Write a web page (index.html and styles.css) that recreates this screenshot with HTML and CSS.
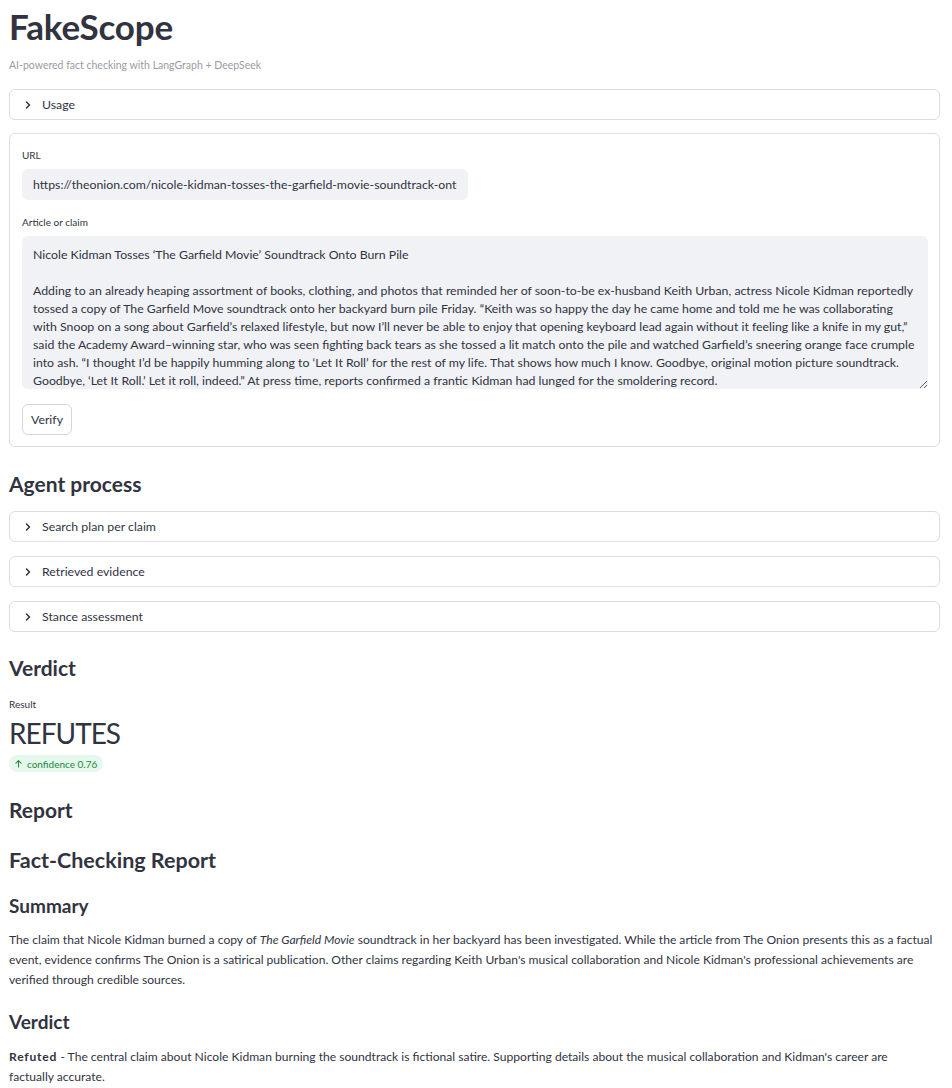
FILE: index.html
```html
<!DOCTYPE html>
<html lang="en">
<head>
<meta charset="utf-8">
<title>FakeScope</title>
<link rel="stylesheet" href="styles.css">
</head>
<body>
<main class="page">
  <h1 class="title">FakeScope</h1>
  <p class="caption">AI-powered fact checking with LangGraph + DeepSeek</p>

  <details class="expander usage">
    <summary><svg class="chev" viewBox="0 0 16 16" width="12" height="12"><path d="M6 4l4 4-4 4" fill="none" stroke="#31333f" stroke-width="2" stroke-linecap="round" stroke-linejoin="round"/></svg><span>Usage</span></summary>
  </details>

  <form class="form-box">
    <label class="field-label" for="url">URL</label>
    <input id="url" class="url-input" type="text" value="https://theonion.com/nicole-kidman-tosses-the-garfield-movie-soundtrack-onto-burn-pile">
    <label class="field-label" for="article">Article or claim</label>
    <textarea id="article" class="article">Nicole Kidman Tosses ‘The Garfield Movie’ Soundtrack Onto Burn Pile

Adding to an already heaping assortment of books, clothing, and photos that reminded her of soon-to-be ex-husband Keith Urban, actress Nicole Kidman reportedly tossed a copy of The Garfield Move soundtrack onto her backyard burn pile Friday. “Keith was so happy the day he came home and told me he was collaborating with Snoop on a song about Garfield’s relaxed lifestyle, but now I’ll never be able to enjoy that opening keyboard lead again without it feeling like a knife in my gut,” said the Academy Award–winning star, who was seen fighting back tears as she tossed a lit match onto the pile and watched Garfield’s sneering orange face crumple into ash. “I thought I’d be happily humming along to ‘Let It Roll’ for the rest of my life. That shows how much I know. Goodbye, original motion picture soundtrack. Goodbye, ‘Let It Roll.’ Let it roll, indeed.” At press time, reports confirmed a frantic Kidman had lunged for the smoldering record.</textarea>
    <div class="btn-row"><button type="button" class="btn">Verify</button></div>
  </form>

  <h2 class="h2 agent-h">Agent process</h2>
  <div class="exp-list">
    <details class="expander">
      <summary><svg class="chev" viewBox="0 0 16 16" width="12" height="12"><path d="M6 4l4 4-4 4" fill="none" stroke="#31333f" stroke-width="2" stroke-linecap="round" stroke-linejoin="round"/></svg><span>Search plan per claim</span></summary>
    </details>
    <details class="expander">
      <summary><svg class="chev" viewBox="0 0 16 16" width="12" height="12"><path d="M6 4l4 4-4 4" fill="none" stroke="#31333f" stroke-width="2" stroke-linecap="round" stroke-linejoin="round"/></svg><span>Retrieved evidence</span></summary>
    </details>
    <details class="expander">
      <summary><svg class="chev" viewBox="0 0 16 16" width="12" height="12"><path d="M6 4l4 4-4 4" fill="none" stroke="#31333f" stroke-width="2" stroke-linecap="round" stroke-linejoin="round"/></svg><span>Stance assessment</span></summary>
    </details>
  </div>

  <h2 class="h2 verdict-h">Verdict</h2>
  <div class="metric">
    <div class="metric-label">Result</div>
    <div class="metric-value">REFUTES</div>
    <div class="delta"><svg viewBox="0 0 12 12" width="9" height="9"><path d="M6 10.5V2M2.5 5.5L6 2l3.5 3.5" fill="none" stroke="currentColor" stroke-width="1.4" stroke-linecap="round" stroke-linejoin="round"/></svg><span>confidence 0.76</span></div>
  </div>

  <h2 class="h2 report-h">Report</h2>
  <section class="report">
    <h2 class="h2 fc-h">Fact-Checking Report</h2>
    <h3 class="h3">Summary</h3>
    <p class="para">The claim that Nicole Kidman burned a copy of <em>The Garfield Movie</em> soundtrack in her backyard has been investigated. While the article from The Onion presents this as a factual event, evidence confirms The Onion is a satirical publication. Other claims regarding Keith Urban's musical collaboration and Nicole Kidman's professional achievements are verified through credible sources.</p>
    <h3 class="h3 h3-verdict">Verdict</h3>
    <p class="para"><strong>Refuted</strong> - The central claim about Nicole Kidman burning the soundtrack is fictional satire. Supporting details about the musical collaboration and Kidman's career are factually accurate.</p>
  </section>
</main>
</body>
</html>
```
FILE: styles.css
```css
* { box-sizing: border-box; }
html, body { margin: 0; padding: 0; background: #ffffff; }
body {
  font-family: "Lato", "Liberation Sans", sans-serif;
  color: #31333f;
  overflow: hidden;
}
.page {
  padding: 0 12px 0 9px;
  width: 952px;
}
.title {
  margin: 0;
  padding-top: 4px;
  font-size: 35px;
  line-height: 44px;
  font-weight: 700;
  color: #31333f;
  letter-spacing: -0.2px;
}
.caption {
  margin: 10px 0 0 0;
  font-size: 10.5px;
  line-height: 14px;
  color: #9a9ba3;
}
.expander {
  border: 1px solid #dcdde2;
  border-radius: 6px;
  height: 31px;
}
.expander summary {
  list-style: none;
  display: flex;
  align-items: center;
  gap: 8px;
  height: 29px;
  padding-left: 12px;
  font-size: 12.3px;
  cursor: pointer;
}
.expander summary::-webkit-details-marker { display: none; }
.chev { flex: none; }
.usage { margin-top: 17px; }
.form-box {
  margin-top: 13px;
  border: 1px solid #dcdde2;
  border-radius: 6px;
  padding: 15px 12px 11px 12px;
  display: flex;
  flex-direction: column;
}
.field-label {
  font-size: 10px;
  line-height: 13px;
  color: #31333f;
  margin-bottom: 7px;
}
.url-input {
  width: 446px;
  height: 31px;
  border: none;
  border-radius: 6px;
  background: #f0f2f6;
  padding: 0 11px;
  font-family: inherit;
  font-size: 12.3px;
  color: #31333f;
  outline: none;
  margin-bottom: 16px;
}
.article {
  width: 906px;
  height: 153px;
  border: none;
  border-radius: 6px;
  background: #f0f2f6;
  padding: 10px 11px 4px 11px;
  font-family: inherit;
  font-size: 12.3px;
  line-height: 18px;
  color: #31333f;
  resize: vertical;
  overflow: hidden;
  outline: none;
}
.btn-row { margin-top: 15px; display: flex; }
.btn {
  height: 31px;
  padding: 0 8px;
  border: 1px solid #d5d6db;
  border-radius: 6px;
  background: #fff;
  font-family: inherit;
  font-size: 12.3px;
  color: #31333f;
}
.h2 {
  margin: 0;
  font-size: 21px;
  font-weight: 700;
  line-height: 28px;
  color: #31333f;
}
.agent-h { margin-top: 23px; }
.exp-list { margin-top: 13px; display: flex; flex-direction: column; gap: 14px; }
.verdict-h { margin-top: 22px; }
.metric { margin-top: 16px; }
.metric-label { font-size: 10px; line-height: 13px; }
.metric-value { font-size: 28px; line-height: 34px; margin-top: 5px; letter-spacing: -1px; }
.delta {
  display: inline-flex;
  align-items: center;
  gap: 4px;
  margin-top: 5px;
  height: 17px;
  padding: 0 6px 0 5px;
  border-radius: 9px;
  background: #e6f7ec;
  color: #21893f;
  font-size: 10px;
}
.report-h { margin-top: 24px; }
.fc-h { margin-top: 22px; font-size: 21.5px; }
.h3 {
  margin: 20px 0 0 0;
  font-size: 19px;
  line-height: 24px;
  font-weight: 700;
}
.h3-verdict { margin-top: 20px; }
.para {
  margin: 12px 0 0 0;
  max-width: 924px;
  font-size: 12.1px;
  line-height: 20px;
}
.h3-verdict + .para { margin-top: 13px; }
.para em { font-style: italic; }
.para strong { font-weight: 700; letter-spacing: 0.8px; }
```
